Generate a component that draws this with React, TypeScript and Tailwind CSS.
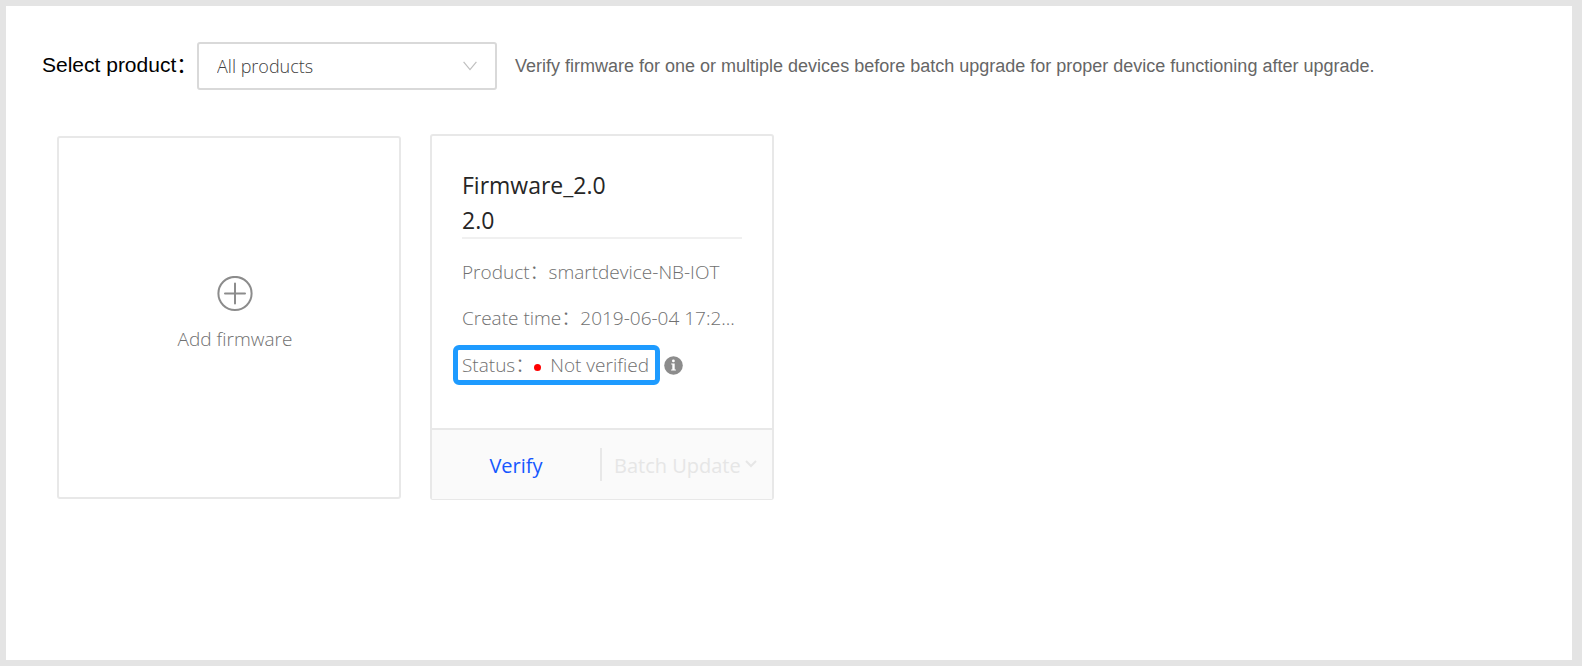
import type { ReactNode } from "react";

function Field({ label, children }: { label: string; children: ReactNode }) {
  return (
    <div className="flex h-[46px] items-center whitespace-nowrap">
      <dt>{label}：</dt>
      <dd>{children}</dd>
    </div>
  );
}

function InfoIcon() {
  return (
    <svg viewBox="0 0 19 19" className="size-[19px]" aria-hidden="true">
      <circle cx="9.5" cy="9.5" r="9.3" fill="#8c8c8c" />
      <circle cx="9.4" cy="4.9" r="1.4" fill="#fff" />
      <path d="M7.2 7.6h3.5v5.9h1.2v1H7.1v-1h1.2V8.6H7.2z" fill="#fff" />
    </svg>
  );
}

function ProductFilter() {
  return (
    <div className="flex items-center">
      <label htmlFor="product" className="flex h-12 w-[155px] shrink-0 items-center pb-[2px] text-[21px] leading-6 whitespace-nowrap text-black">
        Select product：
      </label>
      <div className="relative w-[300px] shrink-0">
        <select
          id="product"
          className="block h-12 w-full appearance-none rounded-[3px] border-2 border-[#d9d9d9] bg-white pr-12 pl-[18px] font-['Open_Sans','Noto_Sans_CJK_SC',sans-serif] text-[18px] font-light text-[#404040]"
        >
          <option>All products</option>
        </select>
        <svg viewBox="0 0 14 10" className="pointer-events-none absolute top-[19px] right-5 h-[10px] w-[14px]" fill="none" stroke="#bfbfbf" strokeWidth="1.2" aria-hidden="true">
          <path d="M.6.8 7 8.6 13.4.8" />
        </svg>
      </div>
      <p className="ml-[18px] text-[18px] leading-6 text-[#666]">
        Verify firmware for one or multiple devices before batch upgrade for proper device functioning after upgrade.
      </p>
    </div>
  );
}

function AddFirmwareCard() {
  return (
    <button className="mt-[2px] flex h-[363px] w-[344px] flex-col items-center rounded-[3px] border-2 border-[#e8e8e8] bg-white pt-[138px] pl-3 text-[19px] leading-7 font-light text-[#707070]">
      <svg viewBox="0 0 36 36" className="size-9" fill="none" stroke="#8c8c8c" strokeWidth="2" aria-hidden="true">
        <circle cx="18" cy="17.5" r="16.6" />
        <path d="M18 7.5v20M8 17.5h20" strokeLinecap="round" />
      </svg>
      <span className="mt-[13px]">Add firmware</span>
    </button>
  );
}

function FirmwareCard() {
  return (
    <article className="flex h-[366px] w-[344px] flex-col rounded-[3px] border-2 border-b border-[#e8e8e8]">
      <div className="grow px-[30px] pt-[31px]">
        <header className="border-b-2 border-[#f0f0f0] text-[23px] text-[#262626]">
          <h2 className="leading-9 font-medium">Firmware_2.0</h2>
          <p className="leading-[34px]">2.0</p>
        </header>
        <dl className="mt-[10px] text-[19px] font-light text-[#707070]">
          <Field label="Product">smartdevice-NB-IOT</Field>
          <Field label="Create time">2019-06-04 17:2...</Field>
          <div className="flex h-12 items-center gap-[9px] whitespace-nowrap">
            <div className="-ml-1 flex h-[30px] w-[197px] items-center rounded-[1px] pl-1 outline-[5px] outline-[#1e9bff]">
              <dt>Status：</dt>
              <dd className="flex items-center gap-[9px]">
                <span className="mt-1 size-[7px] rounded-full bg-[#f00]" />
                Not verified
              </dd>
            </div>
            <InfoIcon />
          </div>
        </dl>
      </div>
      <footer className="flex h-[71px] items-center border-t-2 border-[#e8e8e8] bg-[#fafafa] text-[20px] leading-8">
        <button className="w-[168px] pt-[2px]">
          <span className="text-[#1557ff]">Verify</span>
        </button>
        <button disabled className="flex h-[33px] grow items-center gap-1 border-l-2 border-[#e8e8e8] pt-[2px] pl-3 whitespace-nowrap text-[#e6e6e6]">
          Batch Update
          <svg viewBox="0 0 12 8" className="mb-1 h-2 w-3" fill="none" stroke="currentColor" strokeWidth="2" aria-hidden="true">
            <path d="M1 1l5 5 5-5" />
          </svg>
        </button>
      </footer>
    </article>
  );
}

export default function App() {
  return (
    <div className="flex min-h-screen bg-[#e4e4e4] py-[6px] pr-[10px] pl-[6px] font-['Liberation_Sans','Noto_Sans_CJK_SC',sans-serif]">
      <main className="grow bg-white px-9 pt-9">
        <ProductFilter />
        <section className="mt-11 ml-[15px] flex items-start gap-[29px] font-['Open_Sans','Noto_Sans_CJK_SC',sans-serif]">
          <AddFirmwareCard />
          <FirmwareCard />
        </section>
      </main>
    </div>
  );
}
